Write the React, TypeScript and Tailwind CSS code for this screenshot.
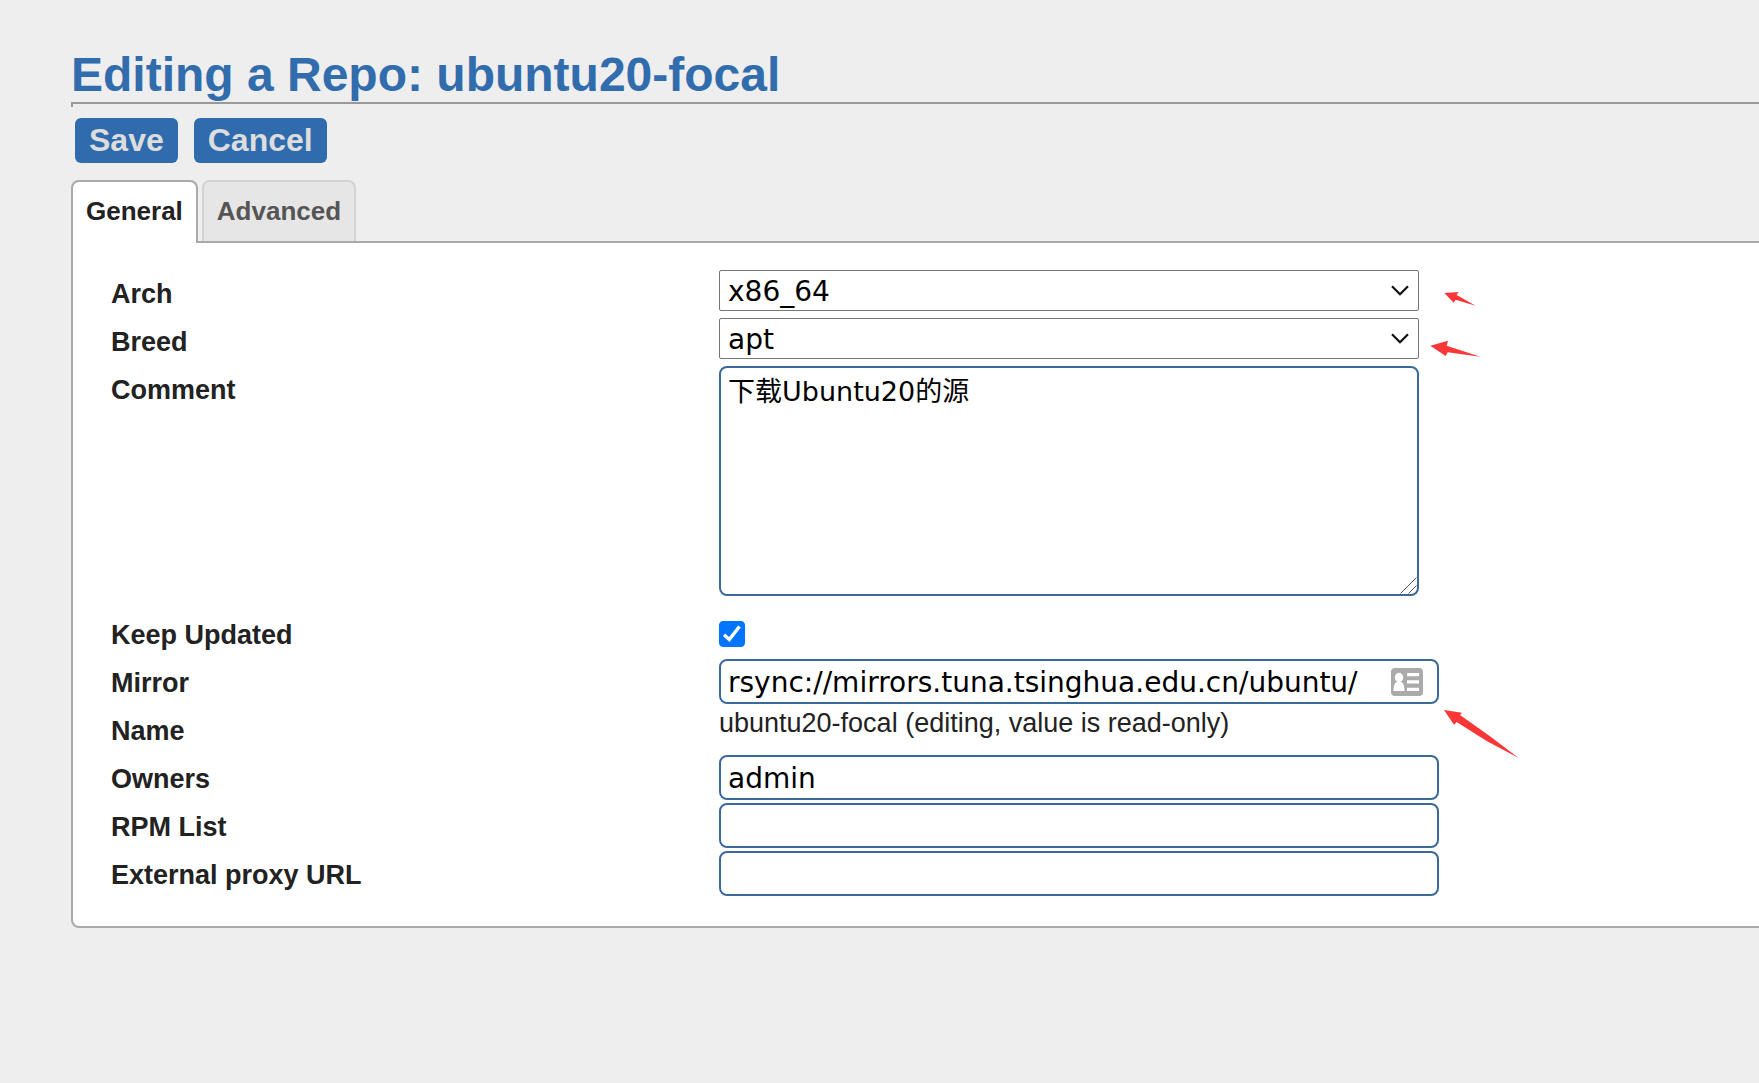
import { useState } from 'react';
import type { ReactNode } from 'react';

const INPUT_CLASS =
  'block h-[45px] w-full rounded-lg border-2 border-[#3a6a9c] bg-white px-[7px] pt-0.5 font-[DejaVu_Sans,sans-serif] text-[28px] text-black outline-none';

interface FieldRowProps {
  label: string;
  htmlFor: string;
  children: ReactNode;
}

function FieldRow({ label, htmlFor, children }: FieldRowProps) {
  return (
    <div className="grid min-h-12 grid-cols-[minmax(0,608px)_minmax(0,1fr)] items-start">
      <label htmlFor={htmlFor} className="text-[27px] leading-[48px] font-bold">
        {label}
      </label>
      {children}
    </div>
  );
}

interface SelectBoxProps {
  id: string;
  value: string;
  options: string[];
  onChange: (value: string) => void;
  children?: ReactNode;
}

function SelectBox({ id, value, options, onChange, children }: SelectBoxProps) {
  return (
    <div className="relative w-full max-w-[700px]">
      <select
        id={id}
        value={value}
        onChange={(event) => onChange(event.target.value)}
        className="block h-[41px] w-full appearance-none rounded-xs border border-[#767676] bg-white px-2 pt-0.5 font-[DejaVu_Sans,sans-serif] text-[28px] leading-[38px] text-black outline-none"
      >
        {options.map((option) => (
          <option key={option}>{option}</option>
        ))}
      </select>
      <svg
        viewBox="0 0 18 11"
        className="pointer-events-none absolute top-[15px] right-[10px] h-[11px] w-[18px]"
        fill="none"
        stroke="#111"
        strokeWidth="2.2"
      >
        <path d="M1 1.2 9 9.2 17 1.2" />
      </svg>
      {children}
    </div>
  );
}

export default function App() {
  const [arch, setArch] = useState('x86_64');
  const [breed, setBreed] = useState('apt');

  return (
    <div className="min-h-screen bg-[#eee] pt-[47px] pb-12 pl-[71px] font-[Liberation_Sans,Arial,sans-serif] text-[#222]">
      <h1 className="text-5xl leading-[55px] font-bold text-[#316cad]">Editing a Repo: ubuntu20-focal</h1>
      <hr className="h-[5px] border-t-2 border-l-2 border-[#999]" />

      <form onSubmit={(event) => event.preventDefault()}>
        <div className="mt-[11px] flex gap-4 pl-1">
          <button type="submit" className="h-[45px] rounded-md bg-[#306bad] px-3.5 text-[32px] leading-[45px] font-bold text-[#ddd]">
            Save
          </button>
          <button type="button" className="h-[45px] rounded-md bg-[#306bad] px-3.5 text-[32px] leading-[45px] font-bold text-[#ddd]">
            Cancel
          </button>
        </div>

        <div role="tablist" className="relative mt-[17px] flex items-start gap-1 text-[26px] leading-[59px] font-bold">
          <button
            type="button"
            role="tab"
            aria-selected="true"
            className="-mb-0.5 h-[63px] rounded-t-lg border-2 border-b-0 border-[#aaa] bg-white px-[13px] pb-0.5"
          >
            General
          </button>
          <button
            type="button"
            role="tab"
            aria-selected="false"
            className="h-[61px] rounded-t-lg border-2 border-b-0 border-[#d3d3d3] bg-[#e6e6e6] px-[13px] text-[#555]"
          >
            Advanced
          </button>
        </div>

        <div className="rounded-bl-lg border-2 border-r-0 border-[#aaa] bg-white py-[27px] pl-[38px]">
          <FieldRow label="Arch" htmlFor="arch">
            <SelectBox id="arch" value={arch} options={['x86_64', 'i386', 'noarch', 'src']} onChange={setArch}>
              <svg viewBox="252 123 96 48" className="absolute top-[21px] left-full ml-[25px] h-4 w-8" fill="#fb3636">
                <path d="M253 129 295 126 290 135 347 167 287 149 281 158Z" />
              </svg>
            </SelectBox>
          </FieldRow>

          <FieldRow label="Breed" htmlFor="breed">
            <SelectBox id="breed" value={breed} options={['apt', 'rhn', 'rsync', 'wget', 'yum']} onChange={setBreed}>
              <svg viewBox="210 270 153 51" className="absolute top-[22px] left-full ml-[11px] h-[17px] w-[51px]" fill="#fb3636">
                <path d="M211 287 264 272 260 287 361 320 263 307 257 318Z" />
              </svg>
            </SelectBox>
          </FieldRow>

          <FieldRow label="Comment" htmlFor="comment">
            <div className="relative mb-[15px] w-full max-w-[700px]">
              <textarea
                id="comment"
                defaultValue="下载Ubuntu20的源"
                className="block h-[230px] w-full resize-none rounded-lg border-2 border-[#3a6a9c] bg-white px-[7px] py-2 font-[DejaVu_Sans,Noto_Sans_CJK_SC,sans-serif] text-[27px] leading-[32px] text-black outline-none"
              />
              <svg
                viewBox="0 0 17 17"
                className="pointer-events-none absolute right-0.5 bottom-0.5 size-[17px]"
                stroke="#555"
                strokeWidth="1"
              >
                <path d="M0.5 16.5 16.5 0.5M8.5 16.5 16.5 8.5" />
              </svg>
            </div>
          </FieldRow>

          <FieldRow label="Keep Updated" htmlFor="keep-updated">
            <div className="relative mt-[10px] size-[26px]">
              <input
                id="keep-updated"
                type="checkbox"
                defaultChecked
                className="peer block size-full appearance-none rounded-sm border border-[#767676] bg-white checked:border-[#0075ff] checked:bg-[#0075ff]"
              />
              <svg
                viewBox="0 0 26 26"
                className="pointer-events-none absolute inset-0 hidden size-full peer-checked:block"
                fill="none"
                stroke="#fff"
                strokeWidth="3.4"
              >
                <path d="M5 13.8 10.300 18.500 20.500 5.500" />
              </svg>
            </div>
          </FieldRow>

          <FieldRow label="Mirror" htmlFor="mirror">
            <div className="relative w-full max-w-[720px]">
              <input id="mirror" type="text" defaultValue="rsync://mirrors.tuna.tsinghua.edu.cn/ubuntu/" className={INPUT_CLASS} />
              <svg viewBox="0 0 32 28" className="absolute top-[9px] right-4 h-7 w-8">
                <rect width="32" height="28" rx="4" fill="#aaa" />
                <ellipse cx="8" cy="9.500" rx="4.200" ry="4.700" fill="#fff" />
                <path d="M2.500 23c0-6 1.500-9.800 5.500-9.800s5.500 3.800 5.500 9.800Z" fill="#fff" />
                <path d="M16 5h12v3.300H16zM16 12.300h12v3.300H16zM16 19.800h12v3.300H16z" fill="#fff" />
              </svg>
              <svg viewBox="192 447 225 150" className="absolute top-[50px] left-full ml-[5px] h-[50px] w-[75px]" fill="#fb3636">
                <path d="M192 450 246 458 240 465 330 529 416 594 320 543 230 486 222 494Z" />
              </svg>
            </div>
          </FieldRow>

          <FieldRow label="Name" htmlFor="name">
            <output id="name" className="text-[27px] leading-8">
              ubuntu20-focal (editing, value is read-only)
            </output>
          </FieldRow>

          <FieldRow label="Owners" htmlFor="owners">
            <div className="w-full max-w-[720px]">
              <input id="owners" type="text" defaultValue="admin" className={INPUT_CLASS} />
            </div>
          </FieldRow>

          <FieldRow label="RPM List" htmlFor="rpm-list">
            <div className="w-full max-w-[720px]">
              <input id="rpm-list" type="text" className={INPUT_CLASS} />
            </div>
          </FieldRow>

          <FieldRow label="External proxy URL" htmlFor="proxy">
            <div className="w-full max-w-[720px]">
              <input id="proxy" type="text" className={INPUT_CLASS} />
            </div>
          </FieldRow>
        </div>
      </form>
    </div>
  );
}
